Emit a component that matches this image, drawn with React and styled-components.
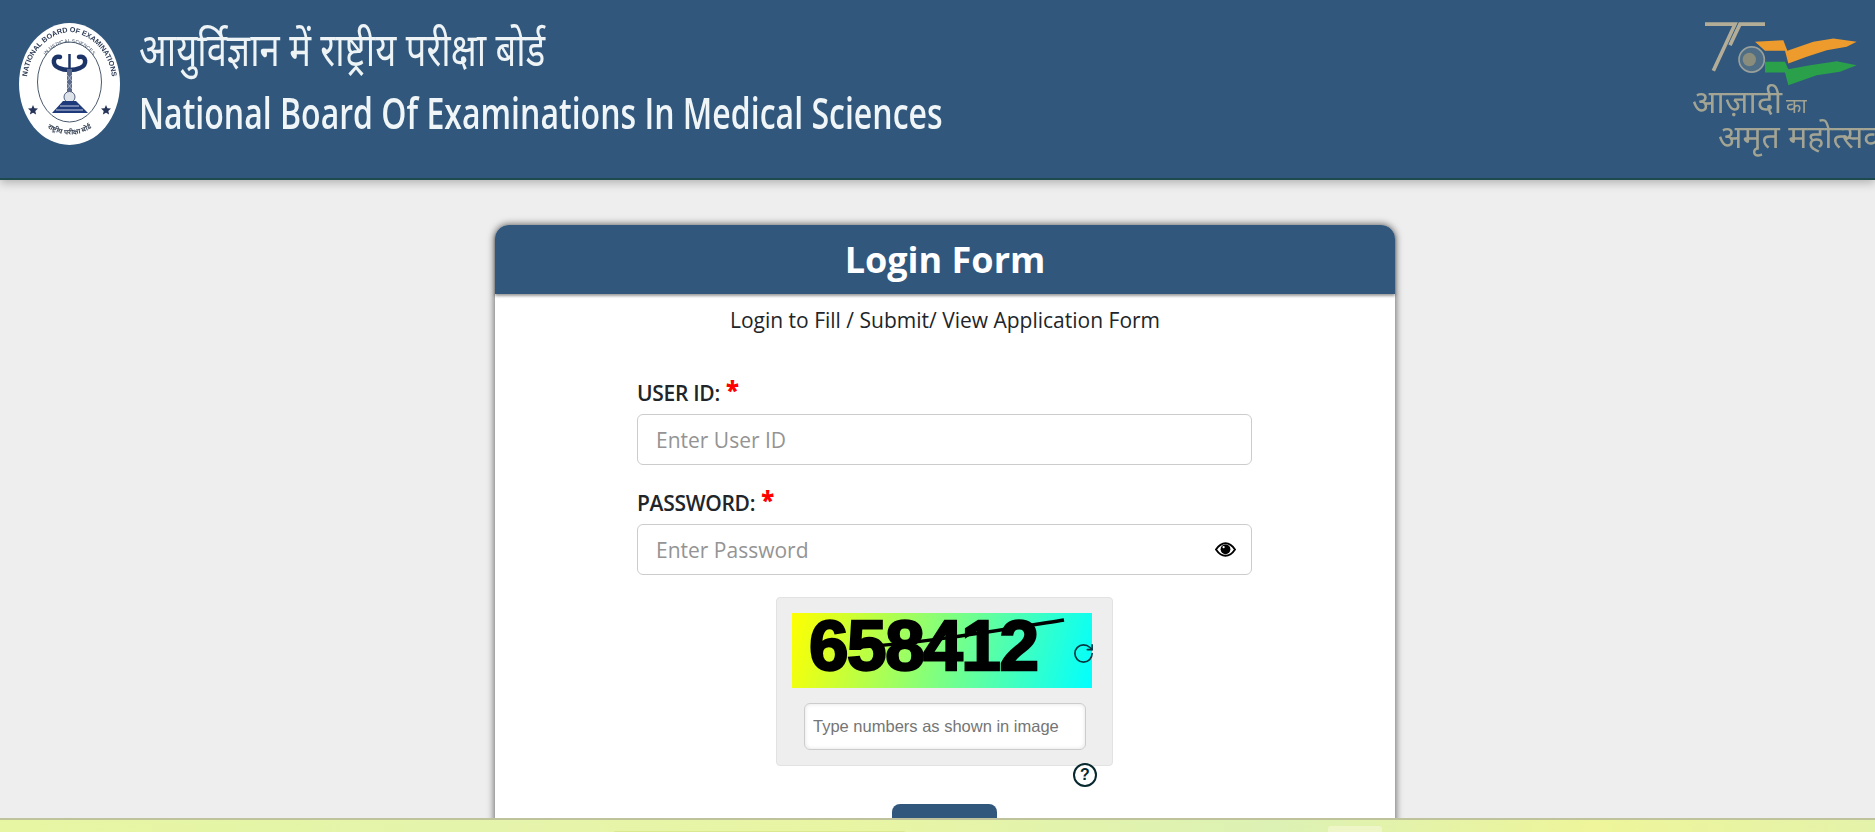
import React from 'react'
import styled, { createGlobalStyle } from 'styled-components'
import { RotateCw } from 'lucide-react'

const GlobalStyle = createGlobalStyle`
  html, body {
    margin: 0;
    height: 100%;
    overflow: hidden;
    background: #eeeeee;
    font-family: 'Open Sans', 'Noto Sans', sans-serif;
  }
  * { box-sizing: border-box; }
`

const Banner = styled.header`
  display: flex;
  justify-content: space-between;
  height: 180px;
  background: #31577d;
  border-bottom: 2px solid #1d4a4d;
  box-shadow: 0 3px 9px rgba(0, 0, 0, .25);
  overflow: hidden;
`
const Brand = styled.div`
  display: flex;
  gap: 19px;
  padding: 23px 0 0 19px;
  filter: blur(.5px);
`
const Titles = styled.div`
  display: flex;
  flex-direction: column;
`
const HindiTitle = styled.div`
  color: #eef4f6;
  font-family: 'Noto Sans', 'Noto Sans Devanagari', 'Lohit Devanagari', sans-serif;
  font-size: 46px;
  line-height: 50px;
  height: 67px;
  white-space: nowrap;
  transform: scaleX(.79);
  transform-origin: left top;
`
const EnglishTitle = styled.div`
  color: #f0f6f8;
  font-family: 'Open Sans', sans-serif;
  font-size: 44px;
  font-weight: 600;
  line-height: 44px;
  white-space: nowrap;
  transform: scaleX(.728);
  transform-origin: left top;
`
const Emblem = styled.div`
  display: flex;
  flex-direction: column;
  width: 183px;
  padding-top: 20px;
  overflow: hidden;
  filter: blur(.6px);
`
const EmblemLine = styled.div`
  color: #a3a493;
  font-family: 'Noto Sans', 'Noto Sans Devanagari', 'Lohit Devanagari', sans-serif;
  font-size: 32px;
  line-height: 27px;
  white-space: nowrap;
  padding-left: ${p => p.$indent || 0}px;
  margin-top: ${p => p.$gap || 0}px;
  small { font-size: 20px; margin-left: 4px; }
`

const Card = styled.main`
  width: 900px;
  margin: 45px 0 0 495px;
  background: #fff;
  border-radius: 14px 14px 0 0;
  box-shadow: 0 0 7px 1px rgba(0, 0, 0, .55);
`
const CardHead = styled.h1`
  display: flex;
  align-items: center;
  justify-content: center;
  height: 69px;
  margin: 0;
  background: #31577d;
  border-radius: 14px 14px 0 0;
  box-shadow: 0 2px 3px rgba(0, 0, 0, .4);
  color: #fff;
  font-size: 36px;
  font-weight: 700;
`
const Subtitle = styled.p`
  margin: 0;
  padding-top: 12px;
  color: #212529;
  font-size: 21px;
  line-height: 28px;
  text-align: center;
`
const Form = styled.form`
  display: flex;
  flex-direction: column;
  width: 615px;
  margin: 45px 0 0 142px;
`
const Label = styled.label`
  display: block;
  height: 35px;
  color: #212529;
  font-size: 21px;
  font-weight: 600;
  line-height: 28px;
  letter-spacing: -.3px;
`
const Star = styled.span`
  color: #f00;
  font-size: 24px;
  font-weight: 800;
  line-height: 20px;
  margin-left: 6px;
  position: relative;
  top: -2px;
`
const Field = styled.div`
  position: relative;
  height: 51px;
  margin-bottom: 24px;
`
const Input = styled.input`
  width: 100%;
  height: 100%;
  padding: 0 18px;
  border: 1px solid #ccc;
  border-radius: 6px;
  background: #fff;
  font-family: 'Open Sans', sans-serif;
  font-size: 21px;
  &::placeholder { color: #949494; opacity: 1; }
`
const EyeButton = styled.span`
  position: absolute;
  right: 16px;
  top: 18px;
  display: flex;
`
const CaptchaRow = styled.div`
  position: relative;
  width: 337px;
  height: 169px;
  margin: -2px 0 0 139px;
  padding: 15px 0 0 15px;
  background: #eee;
  border: 1px solid #e2e2e2;
  border-radius: 4px;
`
const CaptchaImage = styled.div`
  position: relative;
  width: 300px;
  height: 75px;
  padding-left: 17px;
  background: linear-gradient(105deg, #ff0 0%, #0ff 100%);
  color: #000;
  font-family: 'Liberation Sans', sans-serif;
  font-size: 71px;
  font-weight: 700;
  line-height: 66px;
  letter-spacing: -1.4px;
  -webkit-text-stroke: 2.4px #000;
  overflow: hidden;
`
const Strike = styled.svg`
  position: absolute;
  left: 0;
  top: 0;
`
const Reload = styled.span`
  position: absolute;
  left: 295px;
  top: 44px;
  display: flex;
  color: #07343f;
`
const CaptchaInput = styled.input`
  display: block;
  width: 282px;
  height: 47px;
  margin: 15px 0 0 12px;
  padding: 0 8px;
  border: 1px solid #ccc;
  border-radius: 6px;
  background: #fff;
  box-shadow: inset 0 0 4px rgba(0, 0, 0, .12);
  font-family: 'Liberation Sans', sans-serif;
  font-size: 16.5px;
  &::placeholder { color: #757575; opacity: 1; }
`
const Help = styled.span`
  position: absolute;
  left: 296px;
  top: 165px;
  display: flex;
  align-items: center;
  justify-content: center;
  width: 24px;
  height: 24px;
  border: 2.5px solid #07282f;
  border-radius: 50%;
  background: #fff;
  color: #07282f;
  font-family: 'Liberation Sans', sans-serif;
  font-size: 16px;
  font-weight: 700;
`
const Submit = styled.button`
  align-self: center;
  width: 105px;
  height: 56px;
  margin-top: 38px;
  border: 0;
  border-radius: 8px;
  background: #31577d;
  color: #fff;
  font-family: 'Open Sans', sans-serif;
  font-size: 20px;
  padding-top: 26px;
`
const Footer = styled.footer`
  position: fixed;
  left: 0;
  right: 0;
  bottom: 0;
  height: 14px;
  border-top: 2px solid #bfc39c;
  background: linear-gradient(90deg, #e6f6a2 0%, #e4f4ab 25%, #e8f5a3 45%, #dcf1b4 68%, #eef59a 85%, #e4f3aa 100%);
  overflow: hidden;
`
const FooterPill = styled.div`
  position: absolute;
  left: 613px;
  top: 11px;
  width: 293px;
  height: 4px;
  border-radius: 3px 3px 0 0;
  background: #dce88e;
`
const FooterTab = styled.div`
  position: absolute;
  left: 1328px;
  top: 6px;
  width: 54px;
  height: 8px;
  border-radius: 3px 3px 0 0;
  background: #eef6c8;
`

const Seal = () => (
  <svg width="101" height="122" viewBox="0 0 101 122">
    <defs>
      <path id="outerArc" d="M 9 78 C 0 24 38 9 50.5 9 C 63 9 101 24 92 78" />
      <path id="innerArc" d="M 22 42 C 28 25 42 19.5 50.5 19.5 C 59 19.5 73 25 79 42" />
      <path id="lowerArc" d="M 22 98 C 34 116 67 116 79 98" />
    </defs>
    <ellipse cx="50.5" cy="61" rx="50.5" ry="61" fill="#fff" />
    <ellipse cx="50.5" cy="59" rx="32" ry="40" fill="none" stroke="#4a5a6c" strokeWidth="1" />
    <text fill="#2b3a55" fontFamily="Liberation Sans, sans-serif" fontSize="7.2" fontWeight="700">
      <textPath href="#outerArc" startOffset="50%" textAnchor="middle">NATIONAL BOARD OF EXAMINATIONS</textPath>
    </text>
    <text fill="#48566c" fontFamily="Liberation Sans, sans-serif" fontSize="5">
      <textPath href="#innerArc" startOffset="50%" textAnchor="middle">IN MEDICAL SCIENCES</textPath>
    </text>
    <text fill="#3a4658" fontFamily="Noto Sans, sans-serif" fontSize="7" fontWeight="700">
      <textPath href="#lowerArc" startOffset="50%" textAnchor="middle">राष्ट्रीय परीक्षा बोर्ड</textPath>
    </text>
    <path d="M41 34 C34 32 32 42 40 45 C44 47 48 47 50.5 47 C53 47 57 47 61 45 C69 42 67 32 60 34" fill="none" stroke="#1c3468" strokeWidth="4.5" strokeLinecap="round" />
    <path d="M50.5 31 V46" stroke="#1c3468" strokeWidth="2.5" />
    <path d="M50.5 46 V72" stroke="#5a6a8c" strokeWidth="5" />
    <path d="M48 52 L53 58 M53 52 L48 58 M48 60 L53 66 M53 60 L48 66" stroke="#aab4c8" strokeWidth="1" />
    <circle cx="50.5" cy="74" r="5.5" fill="#dfe3ea" stroke="#51607d" />
    <path d="M44 78 H57 L69 90 H33 Z" fill="#1f3a7a" />
    <path d="M41 83 H60 M37 87 H64" stroke="#d5dcec" strokeWidth=".9" />
    <path d="M14 82 L15.4 85.2 L19 85.6 L16.3 88 L17.1 91.5 L14 89.7 L10.9 91.5 L11.7 88 L9 85.6 L12.6 85.2 Z" fill="#27345a" />
    <path d="M87 82 L88.4 85.2 L92 85.6 L89.3 88 L90.1 91.5 L87 89.7 L83.9 91.5 L84.7 88 L82 85.6 L85.6 85.2 Z" fill="#27345a" />
  </svg>
)

const AmritMark = () => (
  <svg width="183" height="67" viewBox="126 60 549 200">
    <path d="M165 72 H255 L190 212" fill="none" stroke="#b3ad97" strokeWidth="11" />
    <path d="M345 72 H270 L240 135" fill="none" stroke="#b3ad97" strokeWidth="11" />
    <circle cx="305" cy="178" r="38" fill="#4f6d85" stroke="#98a09c" strokeWidth="5" />
    <circle cx="298" cy="178" r="20" fill="#8a8d7c" />
    <path d="M315 125 L400 120 L412 152 L490 125 L550 115 L620 125 L590 140 L530 150 L470 170 L415 190 L405 152 L345 152 Z" fill="#ed9b2d" />
    <path d="M345 185 H405 L415 207 L480 195 L560 183 L620 195 L570 215 L500 225 L415 255 L405 217 L345 217 Z" fill="#2aa04b" />
  </svg>
)

const EyeGlyph = () => (
  <svg width="21" height="15" viewBox="0 0 21 15">
    <path d="M1 7.5 C4 3 7 1.2 10.5 1.2 C14 1.2 17 3 20 7.5 C17 12 14 13.8 10.5 13.8 C7 13.8 4 12 1 7.5 Z" fill="#fff" stroke="#000" strokeWidth="1.9" />
    <circle cx="10.5" cy="7.3" r="4.9" fill="#000" />
    <circle cx="8.6" cy="5.2" r="1.1" fill="#fff" />
  </svg>
)

export default function App() {
  return (
    <>
      <GlobalStyle />
      <Banner>
        <Brand>
          <Seal />
          <Titles>
            <HindiTitle>आयुर्विज्ञान में राष्ट्रीय परीक्षा बोर्ड</HindiTitle>
            <EnglishTitle>National Board Of Examinations In Medical Sciences</EnglishTitle>
          </Titles>
        </Brand>
        <Emblem>
          <AmritMark />
          <EmblemLine>आज़ादी<small>का</small></EmblemLine>
          <EmblemLine $indent={26} $gap={3}>अमृत महोत्सव</EmblemLine>
        </Emblem>
      </Banner>
      <Card>
        <CardHead>Login Form</CardHead>
        <Subtitle>Login to Fill / Submit/ View Application Form</Subtitle>
        <Form onSubmit={e => e.preventDefault()}>
          <Label>USER ID:<Star>*</Star></Label>
          <Field>
            <Input placeholder="Enter User ID" />
          </Field>
          <Label>PASSWORD:<Star>*</Star></Label>
          <Field>
            <Input type="password" placeholder="Enter Password" />
            <EyeButton><EyeGlyph /></EyeButton>
          </Field>
          <CaptchaRow>
            <CaptchaImage>
              658412
              <Strike width="300" height="75" viewBox="0 0 300 75">
                <path d="M68 34 C130 30 190 20 272 7" fill="none" stroke="#000" strokeWidth="3.5" />
              </Strike>
            </CaptchaImage>
            <Reload><RotateCw size={23} strokeWidth={1.7} /></Reload>
            <CaptchaInput placeholder="Type numbers as shown in image" />
            <Help>?</Help>
          </CaptchaRow>
          <Submit type="submit">Login</Submit>
        </Form>
      </Card>
      <Footer>
        <FooterPill />
        <FooterTab />
      </Footer>
    </>
  )
}
